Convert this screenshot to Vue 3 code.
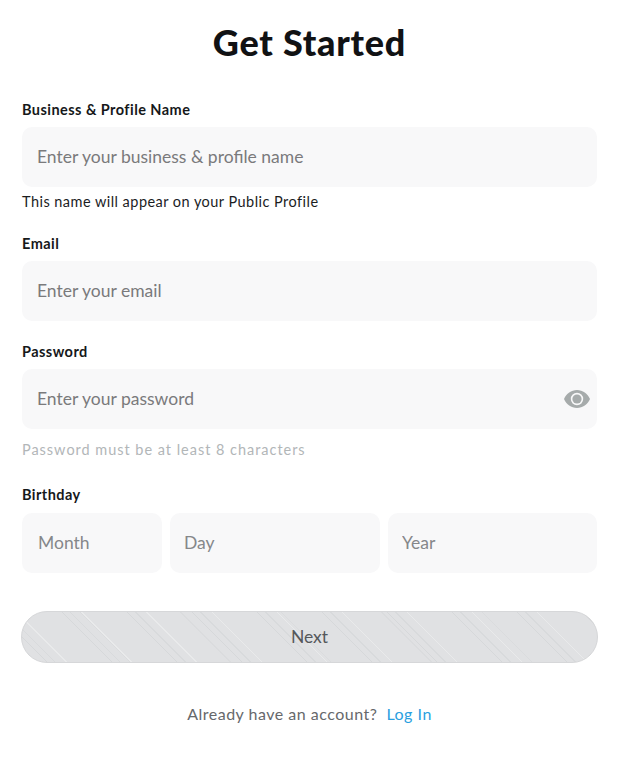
<script setup>
const birthdayFields = [
  { placeholder: 'Month', cls: 'month' },
  { placeholder: 'Day', cls: 'day' },
  { placeholder: 'Year', cls: 'year' },
]
</script>

<template>
  <main class="page">
    <h1 class="title">Get Started</h1>
    <form class="form" @submit.prevent>
      <label class="label first">Business &amp; Profile Name</label>
      <input class="field" type="text" placeholder="Enter your business &amp; profile name" />
      <p class="help">This name will appear on your Public Profile</p>

      <label class="label email">Email</label>
      <input class="field" type="text" placeholder="Enter your email" />

      <label class="label password">Password</label>
      <div class="password-wrap">
        <input class="field" type="password" placeholder="Enter your password" />
        <svg class="eye" viewBox="0 0 26 18" aria-hidden="true">
          <path fill="#a6abab" fill-rule="evenodd" d="M13 0C7.200 0 2.400 3.700 0 9c2.400 5.300 7.200 9 13 9s10.600-3.700 13-9c-2.400-5.300-7.200-9-13-9zm0 15.200A6.200 6.200 0 1 1 13 2.800a6.200 6.200 0 0 1 0 12.400z" />
          <circle cx="13" cy="9" r="4.600" fill="#a6abab" />
        </svg>
      </div>
      <p class="hint">Password must be at least 8 characters</p>

      <label class="label birthday">Birthday</label>
      <div class="birthday-row">
        <input
          v-for="f in birthdayFields"
          :key="f.cls"
          class="field small"
          :class="f.cls"
          type="text"
          :placeholder="f.placeholder"
        />
      </div>

      <button class="next" type="button">Next</button>
    </form>
    <p class="footer">Already have an account?<a class="login" href="#" @click.prevent>Log In</a></p>
  </main>
</template>

<style scoped>
.page {
  width: 622px;
  height: 758px;
  box-sizing: border-box;
  padding: 21px 25px 0 22px;
  font-family: Lato, "Noto Sans", sans-serif;
  color: #111;
  background: #fff;
  overflow: hidden;
}
.title {
  margin: 0;
  height: 42px;
  font-size: 36px;
  line-height: 42px;
  font-weight: 900;
  text-align: center;
  letter-spacing: 0.75px;
  color: #111214;
}
.form {
  display: flex;
  flex-direction: column;
}
.label {
  display: block;
  height: 18px;
  font-size: 14.500px;
  line-height: 18px;
  font-weight: 700;
  letter-spacing: 0.45px;
  color: #16181a;
  margin-bottom: 8px;
}
.label.first { margin-top: 38px; }
.label.email { margin-top: 24px; }
.label.password { margin-top: 22px; }
.label.birthday { margin-top: 27px; margin-bottom: 9px; }
.field {
  display: block;
  width: 100%;
  height: 60px;
  box-sizing: border-box;
  border: 0;
  outline: 0;
  border-radius: 10px;
  background: #f8f8f9;
  padding: 0 15px 2px;
  font-family: inherit;
  font-size: 17.500px;
  color: #333;
}
.field::placeholder {
  color: #7a7a7c;
  opacity: 1;
}
.help {
  margin: 6px 0 0;
  height: 18px;
  font-size: 14.500px;
  line-height: 18px;
  letter-spacing: 0.46px;
  color: #1b1d1f;
}
.password-wrap {
  position: relative;
}
.eye {
  position: absolute;
  right: 7px;
  top: 21px;
  width: 26px;
  height: 18px;
}
.hint {
  margin: 12px 0 0;
  height: 18px;
  font-size: 14.500px;
  line-height: 18px;
  letter-spacing: 0.97px;
  color: #b2b6b8;
}
.birthday-row {
  display: flex;
  gap: 8px;
}
.field.small {
  flex: none;
}
.field.small::placeholder { color: #85878a; }
.month { width: 140px; padding-left: 16px; }
.day { width: 210px; padding-left: 14px; }
.year { width: 209px; padding-left: 14px; }
.next {
  display: block;
  margin: 38px 0 0 -1px;
  width: 577px;
  height: 52px;
  box-sizing: border-box;
  border: 1px solid #d6d7d9;
  border-radius: 26px;
  padding-bottom: 3px;
  font-family: inherit;
  font-size: 17.500px;
  color: #55585b;
  background-color: #e0e1e3;
  background-image:
    repeating-linear-gradient(45deg, transparent 0 17px, #d6d8da 17px 18px, transparent 18px 23px, #d8dadc 23px 24px, transparent 24px 31px, #e9eaeb 31px 32px, transparent 32px 46px),
    repeating-linear-gradient(45deg, transparent 0 5px, rgba(210, 212, 214, 0.4) 5px 6px, transparent 6px 71px);
}
.footer {
  margin: 41px 0 0;
  text-align: center;
  font-size: 16px;
  line-height: 20px;
  color: #66686b;
  letter-spacing: 0.5px;
}
.login {
  margin-left: 9px;
  color: #2a9fe0;
  text-decoration: none;
}
</style>

<style>
html, body { background: #fff; }
</style>
